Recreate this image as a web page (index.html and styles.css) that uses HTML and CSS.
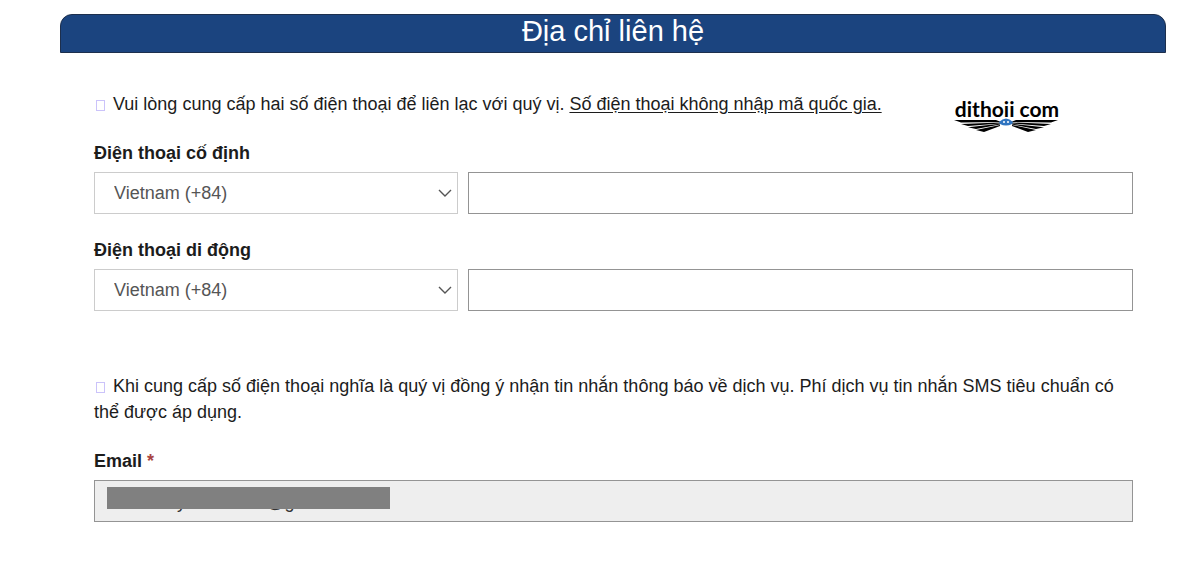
FILE: index.html
```html
<!DOCTYPE html>
<html lang="vi">
<head>
  <meta charset="UTF-8">
  <meta name="viewport" content="width=device-width, initial-scale=1.0">
  <title>Địa chỉ liên hệ</title>
  <link rel="stylesheet" href="styles.css">
</head>
<body>
  <main class="panel">
    <h1 class="panel-title">Địa chỉ liên hệ</h1>
    <form class="contact-form">
      <div class="intro">
        <p class="note"><span class="note-icon"></span>Vui lòng cung cấp hai số điện thoại để liên lạc với quý vị. <u>Số điện thoại không nhập mã quốc gia.</u></p>
        <svg class="logo" viewBox="0 0 108 38" role="img" aria-label="dithoii com">
          <text class="logo-text" x="54" y="22" text-anchor="middle">dithoii com</text>
          <!-- wings -->
          <g id="wing">
            <path d="M1 25 L43 25 L48 27 L8 27.6 Z"/>
            <path d="M8 29 L47 27.4 L47 28.4 L15 31 Z"/>
            <path d="M15 32.2 L47 28.8 L47 29.6 L23 34 Z"/>
            <path d="M23 35 L47 30 L47 31 L31 37 Z"/>
          </g>
          <use href="#wing" transform="matrix(-1 0 0 1 106 0)"/>
          <path class="logo-eye" d="M46 27 Q53 20 60 27 L59 29 Q53 32 47 29 Z"/>
          <circle cx="51" cy="27" r="1" fill="#fff"/>
          <circle cx="55" cy="27" r="1" fill="#fff"/>
        </svg>
      </div>

      <div class="field">
        <label for="landline">Điện thoại cố định</label>
        <div class="phone">
          <select class="control country" aria-label="Mã quốc gia">
            <option>Vietnam (+84)</option>
          </select>
          <input class="control" type="tel" id="landline">
        </div>
      </div>

      <div class="field">
        <label for="mobile">Điện thoại di động</label>
        <div class="phone">
          <select class="control country" aria-label="Mã quốc gia">
            <option>Vietnam (+84)</option>
          </select>
          <input class="control" type="tel" id="mobile">
        </div>
      </div>

      <p class="note consent"><span class="note-icon"></span>Khi cung cấp số điện thoại nghĩa là quý vị đồng ý nhận tin nhắn thông báo về dịch vụ. Phí dịch vụ tin nhắn SMS tiêu chuẩn có thể được áp dụng.</p>

      <div class="field">
        <label for="email">Email <span class="required">*</span></label>
        <div class="email">
          <input class="control" type="text" id="email" value="nnnnnnnynnnnnnnn@gmail.com" readonly>
          <span class="mask"></span>
        </div>
      </div>
    </form>
  </main>
</body>
</html>
```
FILE: styles.css
```css
* {
  box-sizing: border-box;
}
body {
  margin: 0;
  background: #fff;
  color: #1c1c1c;
  font-family: "Liberation Sans", Arial, sans-serif;
  font-size: 18px;
  line-height: 26px;
}
.panel {
  padding: 14px 34px 32px 60px;
}
.panel-title {
  margin: 0;
  height: 39px;
  border: 1px solid #1d2f4d;
  border-radius: 12px 12px 0 0;
  background: #1b447f;
  color: #fff;
  font-size: 29px;
  font-weight: normal;
  line-height: 32px;
  text-align: center;
}
.contact-form {
  padding: 38px 33px 0 34px;
}
.intro {
  display: flex;
  align-items: flex-start;
  gap: 71px;
  height: 49px;
}
.note {
  margin: 0;
}
.note-icon {
  display: inline-block;
  width: 9px;
  height: 11px;
  margin: 0 8px 0 2px;
  border: 1px solid #cbc3fa;
  vertical-align: -1px;
}
.note u {
  text-underline-offset: 2px;
}
.logo {
  flex: none;
  width: 108px;
  height: 38px;
  margin-top: 4px;
}
.logo-text {
  font-family: Lato, "Liberation Sans", sans-serif;
  font-size: 21px;
  font-weight: bold;
}
.logo-eye {
  fill: #2f74c0;
}
.field {
  margin-bottom: 23px;
}
label {
  display: block;
  margin-bottom: 6px;
  font-weight: bold;
}
.phone {
  display: flex;
  gap: 10px;
}
.control {
  width: 100%;
  height: 42px;
  padding: 0 12px;
  border: 1px solid #949494;
  border-radius: 0;
  background: #fff;
  color: #333;
  font: inherit;
}
.country {
  flex: none;
  width: 35%;
  padding: 0 19px;
  border-color: #ccc;
  color: #555;
  appearance: none;
  background: #fff url("data:image/svg+xml,%3Csvg xmlns='http://www.w3.org/2000/svg' width='14' height='8' viewBox='0 0 14 8'%3E%3Cpath d='M1 1l6 6 6-6' fill='none' stroke='%23555' stroke-width='1.4'/%3E%3C/svg%3E") no-repeat right 5px center;
}
.consent {
  margin: 62px 0 23px;
}
.required {
  color: #a94442;
}
.email {
  position: relative;
}
.email .control {
  padding-top: 3px;
  background: #eee;
}
/* hides the address */
.mask {
  position: absolute;
  top: 7px;
  left: 13px;
  width: 283px;
  height: 22px;
  background: #808080;
}
```
